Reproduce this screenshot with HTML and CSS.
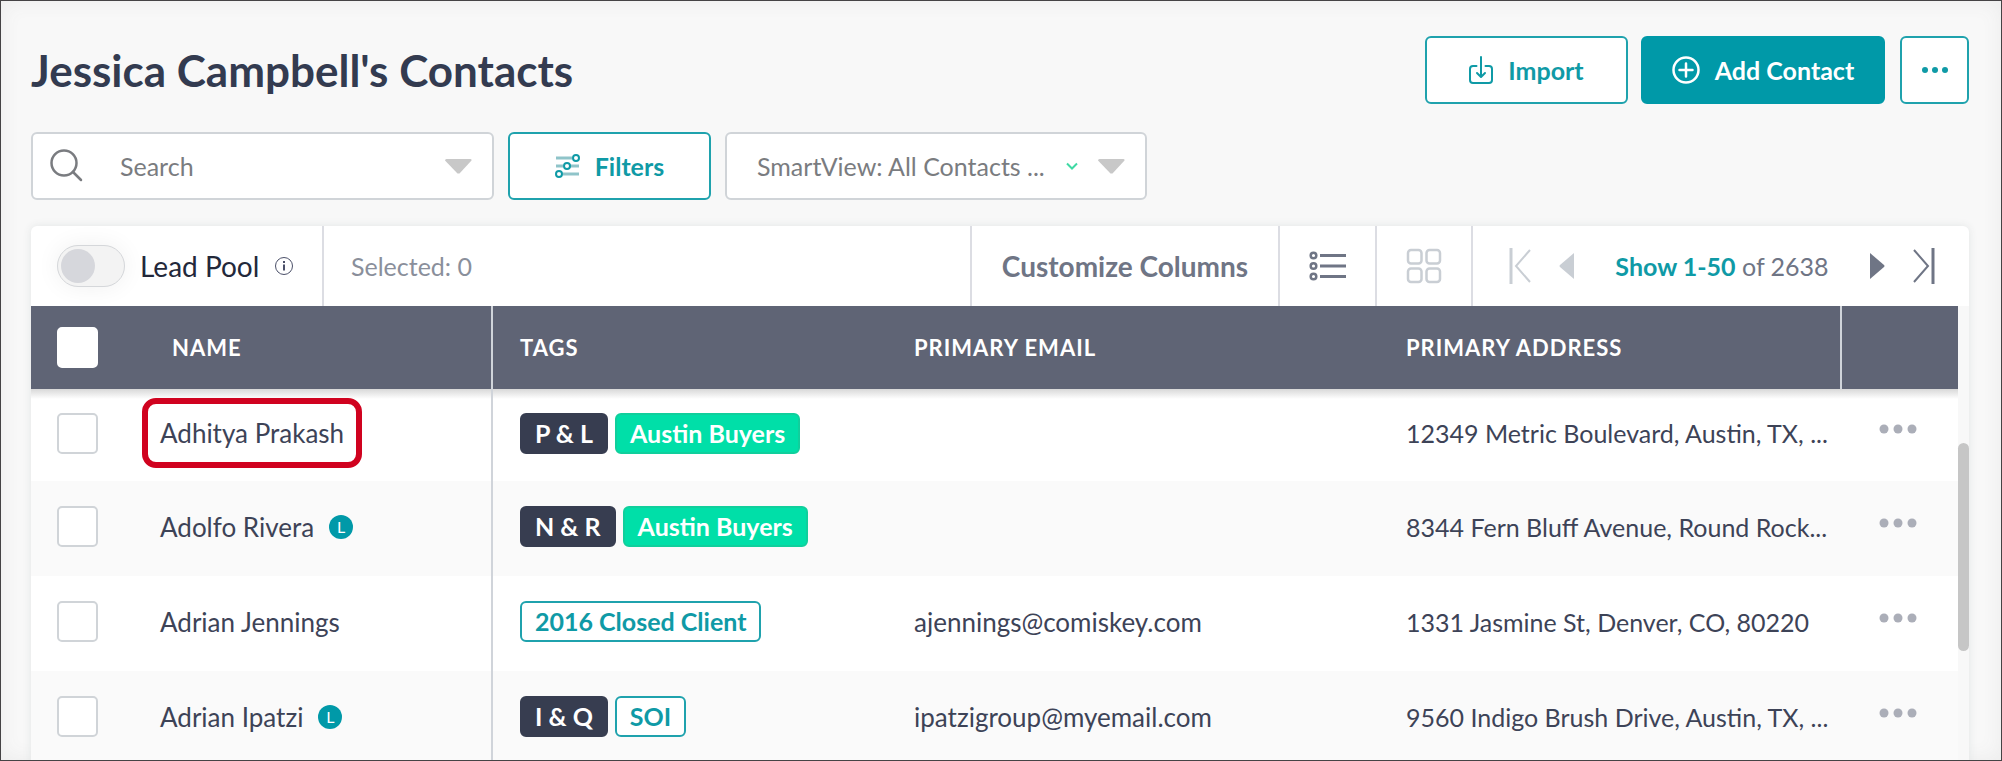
FILE: index.html
```html
<!DOCTYPE html>
<html lang="en">
<head>
<meta charset="utf-8">
<meta name="viewport" content="width=device-width, initial-scale=1">
<title>Jessica Campbell's Contacts</title>
<link rel="stylesheet" href="styles.css">
</head>
<body>
<main class="page">
  <header class="page-header">
    <h1 class="title">Jessica Campbell's Contacts</h1>
    <div class="actions">
      <button class="btn btn-import" type="button">
        <svg class="icon-import" width="24" height="28" viewBox="0 0 24 28" fill="none" stroke="currentColor" stroke-width="2" stroke-linecap="round" stroke-linejoin="round"><path d="M7.500 10H4a3 3 0 0 0-3 3v11a3 3 0 0 0 3 3h16a3 3 0 0 0 3-3V13a3 3 0 0 0-3-3h-3.500M12 1v19M8 17l4 4 4-4"/></svg>
        Import
      </button>
      <button class="btn btn-primary" type="button">
        <svg width="28" height="28" viewBox="0 0 28 28" fill="none" stroke="currentColor" stroke-width="2.500" stroke-linecap="round"><circle cx="14" cy="14" r="12.500"/><path d="M14 7.500v13M7.500 14h13"/></svg>
        Add Contact
      </button>
      <button class="btn btn-more" type="button" aria-label="More actions">
        <svg width="28" height="8" viewBox="0 0 28 8" fill="currentColor"><circle cx="4" cy="4" r="3"/><circle cx="14" cy="4" r="3"/><circle cx="24" cy="4" r="3"/></svg>
      </button>
    </div>
  </header>

  <section class="filters">
    <label class="field search">
      <svg width="34" height="34" viewBox="0 0 34 34" fill="none" stroke="#7a7c80" stroke-width="2.500" stroke-linecap="round"><circle cx="15" cy="14" r="12.500"/><path d="M24 23l8 8"/></svg>
      <input class="search-input" type="text" placeholder="Search" aria-label="Search">
      <svg width="27" height="15" viewBox="0 0 27 15" fill="#c8c8c8"><path d="M0 1.500Q0 0 1.500 0h24Q27 0 26.500 1.500L14.500 14.500h-2z"/></svg>
    </label>
    <button class="btn btn-filter" type="button">
      <svg width="25" height="24" viewBox="0 0 25 24" fill="none" stroke="currentColor" stroke-width="2"><path stroke="#8fc4c9" stroke-width="3" d="M1 4h16M1 12h7M15 12h9M8 20h16"/><circle cx="21" cy="4" r="3"/><circle cx="12" cy="12" r="3"/><circle cx="4" cy="20" r="3"/></svg>
      Filters
    </button>
    <div class="field smartview">
      <select class="smart-select" aria-label="SmartView"><option>SmartView: All Contacts ...</option></select>
      <span class="smart-icons" aria-hidden="true">
        <svg width="12" height="9" viewBox="0 0 12 9" fill="none" stroke="#3fd9a4" stroke-width="2"><path d="M1 1.500l5 5 5-5"/></svg>
        <svg width="27" height="15" viewBox="0 0 27 15" fill="#c8c8c8"><path d="M0 1.500Q0 0 1.500 0h24Q27 0 26.500 1.500L14.500 14.500h-2z"/></svg>
      </span>
    </div>
  </section>

  <section class="card">
    <div class="toolbar">
      <div class="cell cell-pool">
        <input class="toggle" type="checkbox" id="pool">
        <label class="pool-label" for="pool">Lead Pool</label>
        <svg width="20" height="20" viewBox="0 0 20 20" fill="none" stroke="#4b5069" stroke-width="1"><circle cx="10" cy="10" r="8.500"/><path stroke-width="2" d="M10 8.500v6M10 5v2"/></svg>
      </div>
      <div class="cell cell-selected">Selected: 0</div>
      <button class="cell cell-columns" type="button">Customize Columns</button>
      <button class="cell cell-list" type="button" aria-label="List view">
        <svg width="38" height="30" viewBox="0 0 38 30" fill="none" stroke="#6f7585" stroke-width="2.500"><circle cx="4.500" cy="4.500" r="2.800"/><circle cx="4.500" cy="15" r="2.800"/><circle cx="4.500" cy="25.500" r="2.800"/><path stroke-width="3" d="M11 4.500h26M11 15h26M11 25.500h26"/></svg>
      </button>
      <button class="cell cell-grid" type="button" aria-label="Grid view">
        <svg width="36" height="36" viewBox="0 0 36 36" fill="none" stroke="#c9ced4" stroke-width="2.500"><rect x="2" y="2" width="13.500" height="13.500" rx="3"/><rect x="20.500" y="2" width="13.500" height="13.500" rx="3"/><rect x="2" y="20.500" width="13.500" height="13.500" rx="3"/><rect x="20.500" y="20.500" width="13.500" height="13.500" rx="3"/></svg>
      </button>
      <nav class="cell cell-pager" aria-label="Pages">
        <button class="pager-btn" type="button" aria-label="First page"><svg width="22" height="36" viewBox="0 0 22 36" fill="none" stroke="#c9ced4"><path stroke-width="3" d="M2 0v36"/><path stroke-width="2" d="M21 2L7 18l14 16"/></svg></button>
        <button class="pager-btn" type="button" aria-label="Previous page"><svg width="16" height="28" viewBox="0 0 16 28" fill="#c9ced4"><path d="M15 1v26L1 15q-1-1 0-2z"/></svg></button>
        <span class="pager-text"><a class="pager-link" href="#">Show 1-50</a> of 2638</span>
        <button class="pager-btn" type="button" aria-label="Next page"><svg width="16" height="28" viewBox="0 0 16 28" fill="#6f7585"><path d="M1 1v26l14-12q1-1 0-2z"/></svg></button>
        <button class="pager-btn" type="button" aria-label="Last page"><svg width="22" height="36" viewBox="0 0 22 36" fill="none" stroke="#6f7585"><path stroke-width="3" d="M20 0v36"/><path stroke-width="2" d="M1 2l14 16L1 34"/></svg></button>
      </nav>
    </div>

    <div class="list">
      <table class="contacts">
        <colgroup><col class="col-check"><col class="col-name"><col class="col-tags"><col class="col-email"><col><col class="col-more"></colgroup>
        <thead>
          <tr>
            <th scope="col" class="check"><input class="box" type="checkbox" aria-label="Select all"></th>
            <th scope="col" class="name">NAME</th>
            <th scope="col">TAGS</th>
            <th scope="col">PRIMARY EMAIL</th>
            <th scope="col">PRIMARY ADDRESS</th>
            <th class="more"></th>
          </tr>
        </thead>
        <tbody>
          <tr>
            <td class="check"><input class="box" type="checkbox" aria-label="Select Adhitya Prakash"></td>
            <td class="name"><a class="person highlighted" href="#">Adhitya Prakash</a></td>
            <td><div class="tags"><span class="tag dark">P &amp; L</span><span class="tag green">Austin Buyers</span></div></td>
            <td class="email"></td>
            <td>12349 Metric Boulevard, Austin, TX, ...</td>
            <td class="more"><button class="dots" type="button" aria-label="Options for Adhitya Prakash"><svg width="38" height="10" viewBox="0 0 38 10" fill="#abaeb8"><circle cx="5" cy="5" r="4.500"/><circle cx="19" cy="5" r="4.500"/><circle cx="33" cy="5" r="4.500"/></svg></button></td>
          </tr>
          <tr>
            <td class="check"><input class="box" type="checkbox" aria-label="Select Adolfo Rivera"></td>
            <td class="name"><div class="who"><a class="person" href="#">Adolfo Rivera</a><span class="lead">L</span></div></td>
            <td><div class="tags"><span class="tag dark">N &amp; R</span><span class="tag green">Austin Buyers</span></div></td>
            <td class="email"></td>
            <td>8344 Fern Bluff Avenue, Round Rock...</td>
            <td class="more"><button class="dots" type="button" aria-label="Options for Adolfo Rivera"><svg width="38" height="10" viewBox="0 0 38 10" fill="#abaeb8"><circle cx="5" cy="5" r="4.500"/><circle cx="19" cy="5" r="4.500"/><circle cx="33" cy="5" r="4.500"/></svg></button></td>
          </tr>
          <tr>
            <td class="check"><input class="box" type="checkbox" aria-label="Select Adrian Jennings"></td>
            <td class="name"><a class="person" href="#">Adrian Jennings</a></td>
            <td><div class="tags"><span class="tag outline">2016 Closed Client</span></div></td>
            <td class="email">ajennings@comiskey.com</td>
            <td>1331 Jasmine St, Denver, CO, 80220</td>
            <td class="more"><button class="dots" type="button" aria-label="Options for Adrian Jennings"><svg width="38" height="10" viewBox="0 0 38 10" fill="#abaeb8"><circle cx="5" cy="5" r="4.500"/><circle cx="19" cy="5" r="4.500"/><circle cx="33" cy="5" r="4.500"/></svg></button></td>
          </tr>
          <tr>
            <td class="check"><input class="box" type="checkbox" aria-label="Select Adrian Ipatzi"></td>
            <td class="name"><div class="who"><a class="person" href="#">Adrian Ipatzi</a><span class="lead">L</span></div></td>
            <td><div class="tags"><span class="tag dark">I &amp; Q</span><span class="tag outline">SOI</span></div></td>
            <td class="email">ipatzigroup@myemail.com</td>
            <td>9560 Indigo Brush Drive, Austin, TX, ...</td>
            <td class="more"><button class="dots" type="button" aria-label="Options for Adrian Ipatzi"><svg width="38" height="10" viewBox="0 0 38 10" fill="#abaeb8"><circle cx="5" cy="5" r="4.500"/><circle cx="19" cy="5" r="4.500"/><circle cx="33" cy="5" r="4.500"/></svg></button></td>
          </tr>
        </tbody>
      </table>
      <div class="scroll-track"><div class="scroll-thumb"></div></div>
    </div>
  </section>
</main>
</body>
</html>
```
FILE: styles.css
```css
* { box-sizing: border-box; }

body {
  margin: 0;
  font-family: Lato, "Open Sans", sans-serif;
  font-size: 25px;
  line-height: 32px;
  color: #3d4357;
}

button, input, select { font: inherit; color: inherit; margin: 0; }
button { border: 0; background: none; padding: 0; cursor: pointer; }
a { color: inherit; text-decoration: none; }
svg { display: block; flex: none; }

.page {
  height: 100vh;
  overflow: hidden;
  padding: 35px 32px 0 30px;
  border: 1px solid #454345;
  background: #f8f8f8;
  box-shadow: inset 0 0 20px #ebebeb;
}

.page-header { display: flex; align-items: center; justify-content: space-between; }
.title { margin: 0; font-size: 44px; line-height: 48px; font-weight: 700; color: #333b50; }
.actions { display: flex; }

.btn {
  display: flex;
  align-items: center;
  justify-content: center;
  gap: 15px;
  height: 68px;
  border: 2px solid #1fa2ad;
  border-radius: 6px;
  background: #fff;
  color: #0f9aa6;
  font-weight: 700;
}
.btn-import { width: 203px; }
.btn-primary { width: 244px; margin: 0 15px 0 13px; background: #0099a8; border-color: #0099a8; color: #fff; }
.btn-more { width: 69px; }
.btn-filter { width: 203px; }

.filters { display: flex; gap: 14px; margin-top: 28px; }
.field {
  display: flex;
  align-items: center;
  height: 68px;
  border: 2px solid #d0d4d8;
  border-radius: 6px;
  background: #fff;
  color: #7a7c80;
}
.search { width: 463px; padding: 0 20px 0 16px; }
.search-input {
  flex: 1;
  min-width: 0;
  padding: 0 0 0 37px;
  border: 0;
  outline: 0;
  background: none;
}
.search-input::placeholder { color: #7a7c80; opacity: 1; }
.smartview { display: grid; align-items: center; width: 422px; }
.smart-select {
  grid-area: 1 / 1;
  height: 64px;
  padding: 0 0 0 30px;
  border: 0;
  background: none;
  appearance: none;
}
.smart-icons {
  grid-area: 1 / 1;
  display: flex;
  align-items: center;
  justify-content: flex-end;
  gap: 20px;
  padding-right: 20px;
  pointer-events: none;
}

.card {
  margin-top: 26px;
  border-radius: 6px 6px 0 0;
  background: #fff;
  box-shadow: 0 0 8px #e2e5e5;
}
.toolbar { display: flex; height: 80px; color: #6f7585; }
.cell { display: flex; align-items: center; justify-content: center; }
.cell + .cell { border-left: 2px solid #dcdde3; }
.cell-pool { width: 291px; padding-left: 26px; justify-content: flex-start; gap: 15px; color: #23283a; }
.cell-selected { flex: 1; justify-content: flex-start; padding-left: 27px; color: #8a8f9b; }
.cell-columns { width: 308px; font-size: 28px; font-weight: 700; }
.cell-list { width: 97px; }
.cell-grid { width: 96px; }
.cell-pager { width: 498px; padding: 0 34px 0 36px; justify-content: space-between; }

.toggle {
  appearance: none;
  width: 68px;
  height: 42px;
  padding: 3px;
  border: 1px solid #d5d7da;
  border-radius: 21px;
  background: #f3f3f3;
  box-shadow: 0 0 24px #f0f0f0;
}
.toggle::before {
  content: "";
  display: block;
  width: 34px;
  height: 34px;
  border-radius: 50%;
  background: #d6d7dc;
}
.pool-label { font-size: 28px; }
.pager-btn { display: flex; }
.pager-text { padding: 0 12px; }
.pager-link { color: #0f9aa6; font-weight: 700; }

.list { display: flex; }
.contacts { flex: 1; width: 100%; table-layout: fixed; border-collapse: separate; border-spacing: 0; }
.col-check { width: 112px; }
.col-name { width: 350px; }
.col-tags { width: 394px; }
.col-email { width: 492px; }
.col-more { width: 118px; }

.contacts th {
  height: 83px;
  padding: 0 0 0 27px;
  background: #5f6475;
  color: #fff;
  font-size: 22px;
  letter-spacing: 1px;
  text-align: left;
}
.contacts td { height: 95px; padding: 0 0 4px 27px; white-space: nowrap; }
.contacts tbody tr:first-child td {
  height: 92px;
  background: linear-gradient(#d8d8d8, #fff 10px);
}
.contacts .check { padding-left: 26px; }
.contacts .name { padding-left: 17px; border-right: 2px solid #d0d4da; }
.contacts th.name { padding-left: 29px; }
.contacts th.more { border-left: 2px solid #d0d4da; }
.contacts td.name, .contacts td.email { font-size: 26px; }
.contacts td.more { padding: 0 0 12px 39px; }
.contacts tbody tr:nth-child(even) { background: #fafafa; }

.box {
  appearance: none;
  display: block;
  width: 41px;
  height: 41px;
  border: 2px solid #d0d4d8;
  border-radius: 5px;
  background: #fff;
}
th .box { border-color: #fff; }

.who { display: flex; align-items: center; gap: 15px; }
.person { position: relative; }
.highlighted::after {
  content: "";
  position: absolute;
  inset: -19px -18px;
  border: 6px solid #d0021f;
  border-radius: 14px;
}
.lead {
  width: 24px;
  height: 24px;
  border-radius: 50%;
  background: #0099a8;
  color: #fff;
  font-size: 16px;
  line-height: 24px;
  text-align: center;
}
.tags { display: flex; gap: 7px; }
.tag {
  height: 41px;
  padding: 0 13px;
  border: 2px solid;
  border-radius: 6px;
  line-height: 37px;
  font-weight: 700;
}
.tag.dark { background: #373d50; border-color: #373d50; color: #fff; }
.tag.green { background: #00dfa8; border-color: #10cf9c; color: #fff; }
.tag.outline { background: #fff; border-color: #1fa2ad; color: #0f9aa6; }
.dots { display: block; }

.scroll-track { width: 11px; background: #f8f8f8; }
.scroll-thumb { height: 208px; margin-top: 137px; border-radius: 6px; background: #c6c6c6; }
```
